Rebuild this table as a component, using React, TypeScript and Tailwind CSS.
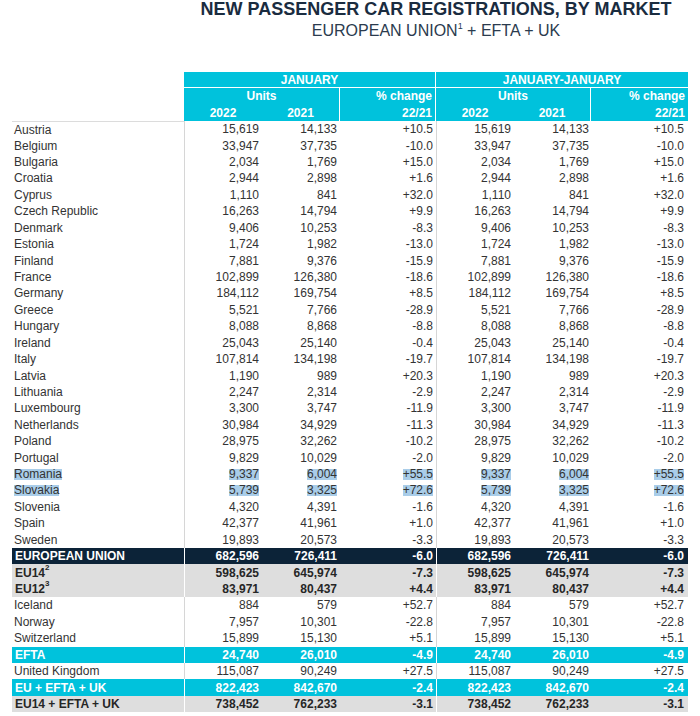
import type { ReactNode } from 'react';

type Kind = 'plain' | 'mark' | 'dark' | 'gray' | 'cyan';

interface Row {
  label: ReactNode;
  y22: string;
  y21: string;
  pct: string;
  kind: Kind;
}

const rows: Row[] = [
  { label: 'Austria', y22: '15,619', y21: '14,133', pct: '+10.5', kind: 'plain' },
  { label: 'Belgium', y22: '33,947', y21: '37,735', pct: '-10.0', kind: 'plain' },
  { label: 'Bulgaria', y22: '2,034', y21: '1,769', pct: '+15.0', kind: 'plain' },
  { label: 'Croatia', y22: '2,944', y21: '2,898', pct: '+1.6', kind: 'plain' },
  { label: 'Cyprus', y22: '1,110', y21: '841', pct: '+32.0', kind: 'plain' },
  { label: 'Czech Republic', y22: '16,263', y21: '14,794', pct: '+9.9', kind: 'plain' },
  { label: 'Denmark', y22: '9,406', y21: '10,253', pct: '-8.3', kind: 'plain' },
  { label: 'Estonia', y22: '1,724', y21: '1,982', pct: '-13.0', kind: 'plain' },
  { label: 'Finland', y22: '7,881', y21: '9,376', pct: '-15.9', kind: 'plain' },
  { label: 'France', y22: '102,899', y21: '126,380', pct: '-18.6', kind: 'plain' },
  { label: 'Germany', y22: '184,112', y21: '169,754', pct: '+8.5', kind: 'plain' },
  { label: 'Greece', y22: '5,521', y21: '7,766', pct: '-28.9', kind: 'plain' },
  { label: 'Hungary', y22: '8,088', y21: '8,868', pct: '-8.8', kind: 'plain' },
  { label: 'Ireland', y22: '25,043', y21: '25,140', pct: '-0.4', kind: 'plain' },
  { label: 'Italy', y22: '107,814', y21: '134,198', pct: '-19.7', kind: 'plain' },
  { label: 'Latvia', y22: '1,190', y21: '989', pct: '+20.3', kind: 'plain' },
  { label: 'Lithuania', y22: '2,247', y21: '2,314', pct: '-2.9', kind: 'plain' },
  { label: 'Luxembourg', y22: '3,300', y21: '3,747', pct: '-11.9', kind: 'plain' },
  { label: 'Netherlands', y22: '30,984', y21: '34,929', pct: '-11.3', kind: 'plain' },
  { label: 'Poland', y22: '28,975', y21: '32,262', pct: '-10.2', kind: 'plain' },
  { label: 'Portugal', y22: '9,829', y21: '10,029', pct: '-2.0', kind: 'plain' },
  { label: 'Romania', y22: '9,337', y21: '6,004', pct: '+55.5', kind: 'mark' },
  { label: 'Slovakia', y22: '5,739', y21: '3,325', pct: '+72.6', kind: 'mark' },
  { label: 'Slovenia', y22: '4,320', y21: '4,391', pct: '-1.6', kind: 'plain' },
  { label: 'Spain', y22: '42,377', y21: '41,961', pct: '+1.0', kind: 'plain' },
  { label: 'Sweden', y22: '19,893', y21: '20,573', pct: '-3.3', kind: 'plain' },
  { label: 'EUROPEAN UNION', y22: '682,596', y21: '726,411', pct: '-6.0', kind: 'dark' },
  {
    label: (
      <>
        EU14<sup className="text-[8px] relative -top-[5px]">2</sup>
      </>
    ),
    y22: '598,625',
    y21: '645,974',
    pct: '-7.3',
    kind: 'gray',
  },
  {
    label: (
      <>
        EU12<sup className="text-[8px] relative -top-[5px]">3</sup>
      </>
    ),
    y22: '83,971',
    y21: '80,437',
    pct: '+4.4',
    kind: 'gray',
  },
  { label: 'Iceland', y22: '884', y21: '579', pct: '+52.7', kind: 'plain' },
  { label: 'Norway', y22: '7,957', y21: '10,301', pct: '-22.8', kind: 'plain' },
  { label: 'Switzerland', y22: '15,899', y21: '15,130', pct: '+5.1', kind: 'plain' },
  { label: 'EFTA', y22: '24,740', y21: '26,010', pct: '-4.9', kind: 'cyan' },
  { label: 'United Kingdom', y22: '115,087', y21: '90,249', pct: '+27.5', kind: 'plain' },
  { label: 'EU + EFTA + UK', y22: '822,423', y21: '842,670', pct: '-2.4', kind: 'cyan' },
  { label: 'EU14 + EFTA + UK', y22: '738,452', y21: '762,233', pct: '-3.1', kind: 'gray' },
];

const rowStyle: Record<Kind, string> = {
  plain: 'bg-white text-[#333333]',
  mark: 'bg-white text-[#333333]',
  dark: 'bg-[#0c2338] text-white font-bold',
  gray: 'bg-[#dedede] text-[#262626] font-bold',
  cyan: 'bg-[#00c2dc] text-white font-bold',
};

// selected-text look on the Romania / Slovakia rows
function Mark({ on, children }: { on: boolean; children: ReactNode }) {
  if (!on) return <>{children}</>;
  return <span className="inline-block bg-[#a9cde9] leading-[11px] h-[11px]">{children}</span>;
}

function BodyRow({ row, first }: { row: Row; first: boolean }) {
  const colored = row.kind === 'dark' || row.kind === 'gray' || row.kind === 'cyan';
  const sep = colored ? 'border-white' : 'border-[#d6d6d6]';
  const on = row.kind === 'mark';
  const cells = [row.y22, row.y21, row.pct, row.y22, row.y21, row.pct];
  const widths = ['w-[78px]', 'w-[78px]', 'w-[96px]', 'w-[77px]', 'w-[78px]', 'w-[97px]'];
  const pads = ['pr-[3px]', 'pr-[3px]', 'pr-[3px]', 'pr-[2px]', 'pr-[2px]', 'pr-[4px]'];

  return (
    <div className={`flex h-[16.43px] items-center ${rowStyle[row.kind]}`}>
      <div
        className={`w-[172px] h-full flex items-center ${
          first ? 'border-t border-[#dcdcdc]' : ''
        } ${colored ? 'pl-[3px]' : 'pl-[2px]'}`}
      >
        <Mark on={on}>{row.label}</Mark>
      </div>
      {cells.map((v, i) => (
        <div
          key={i}
          className={`${widths[i]} ${pads[i]} h-full flex items-center justify-end ${
            i === 0 || i === 3 ? `border-l ${sep}` : ''
          }`}
        >
          <Mark on={on}>{v}</Mark>
        </div>
      ))}
    </div>
  );
}

function HeaderBlock({ title, last }: { title: string; last?: boolean }) {
  return (
    <div className={`flex flex-col ${last ? 'w-[252px]' : 'w-[252px] border-r border-white'}`}>
      <div className="h-[16px] flex items-center justify-center border-b border-white">{title}</div>
      <div className="flex">
        <div className={`${last ? 'w-[155px]' : 'w-[156px]'} border-r border-white flex flex-col`}>
          <div className="h-[16.5px] flex items-center justify-center">Units</div>
          <div className="h-[16.5px] flex">
            <div className="w-[78px] flex items-center justify-center">2022</div>
            <div className="flex-1 flex items-center justify-center">2021</div>
          </div>
        </div>
        <div className="flex-1 flex flex-col items-end pr-[3px]">
          <div className="h-[16.5px] flex items-center">% change</div>
          <div className="h-[16.5px] flex items-center">22/21</div>
        </div>
      </div>
    </div>
  );
}

export default function App() {
  return (
    <div className="w-[700px] h-[716px] bg-white overflow-hidden font-['Liberation_Sans',Arial,sans-serif]">
      <div className="pl-[184px] w-[688px]">
        <h1 className="text-[18px] leading-[18px] font-bold text-[#1a2c40] text-center">
          NEW PASSENGER CAR REGISTRATIONS, BY MARKET
        </h1>
        <p className="mt-[5px] text-[16px] leading-[16px] text-[#2b3b4e] text-center">
          EUROPEAN UNION<sup className="text-[9px] relative -top-[7px]">1</sup> + EFTA + UK
        </p>
      </div>

      <div className="mt-[33px] ml-[12px] w-[676px]">
        <div className="flex">
          <div className="w-[172px]" />
          <div className="flex bg-[#00c2dc] text-white font-bold text-[12px]">
            <HeaderBlock title="JANUARY" />
            <HeaderBlock title="JANUARY-JANUARY" last />
          </div>
        </div>
        <div className="text-[12px]">
          {rows.map((r, i) => (
            <BodyRow key={i} row={r} first={i === 0} />
          ))}
        </div>
      </div>
    </div>
  );
}
